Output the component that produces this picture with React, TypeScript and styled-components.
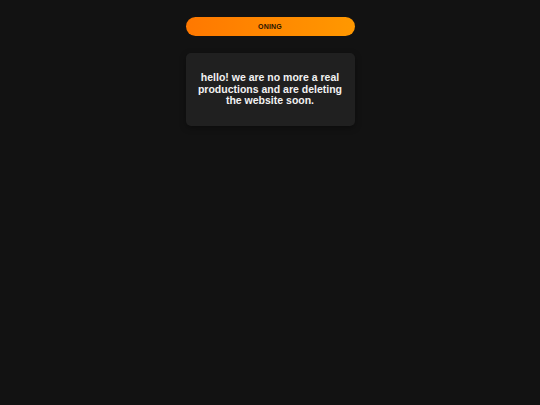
import React from "react";
import styled, { createGlobalStyle } from "styled-components";

const Global = createGlobalStyle`
  html, body { margin: 0; padding: 0; background: #121212; }
  body { font-family: "Liberation Sans", Arial, sans-serif; }
  #root { min-height: 405px; }
`;

const Page = styled.div`
  width: 540px;
  min-height: 405px;
  display: flex;
  flex-direction: column;
  align-items: center;
  padding-top: 17px;
  gap: 17px;
  box-sizing: border-box;
`;

const Pill = styled.button`
  width: 169px;
  height: 19px;
  border: none;
  border-radius: 10px;
  background: linear-gradient(90deg, #ff7800, #ff9800);
  color: #2a1400;
  font-family: "Liberation Sans", Arial, sans-serif;
  font-weight: 700;
  font-size: 7px;
  letter-spacing: 0.2px;
  padding: 0;
  display: flex;
  align-items: center;
  justify-content: center;
`;

const Card = styled.div`
  width: 169px;
  height: 73px;
  box-sizing: border-box;
  background: #202020;
  border-radius: 5px;
  box-shadow: 0 2px 6px rgba(0, 0, 0, 0.35);
  display: flex;
  align-items: center;
  justify-content: center;
  padding: 0 11px;
`;

const Message = styled.p`
  margin: 0;
  color: #f2f2f2;
  font-weight: 700;
  font-size: 10.5px;
  line-height: 11.5px;
  text-align: center;
`;

export default function App() {
  return (
    <>
      <Global />
      <Page>
        <Pill>ONING</Pill>
        <Card>
          <Message>
            hello! we are no more a real productions and are deleting the website soon.
          </Message>
        </Card>
      </Page>
    </>
  );
}
